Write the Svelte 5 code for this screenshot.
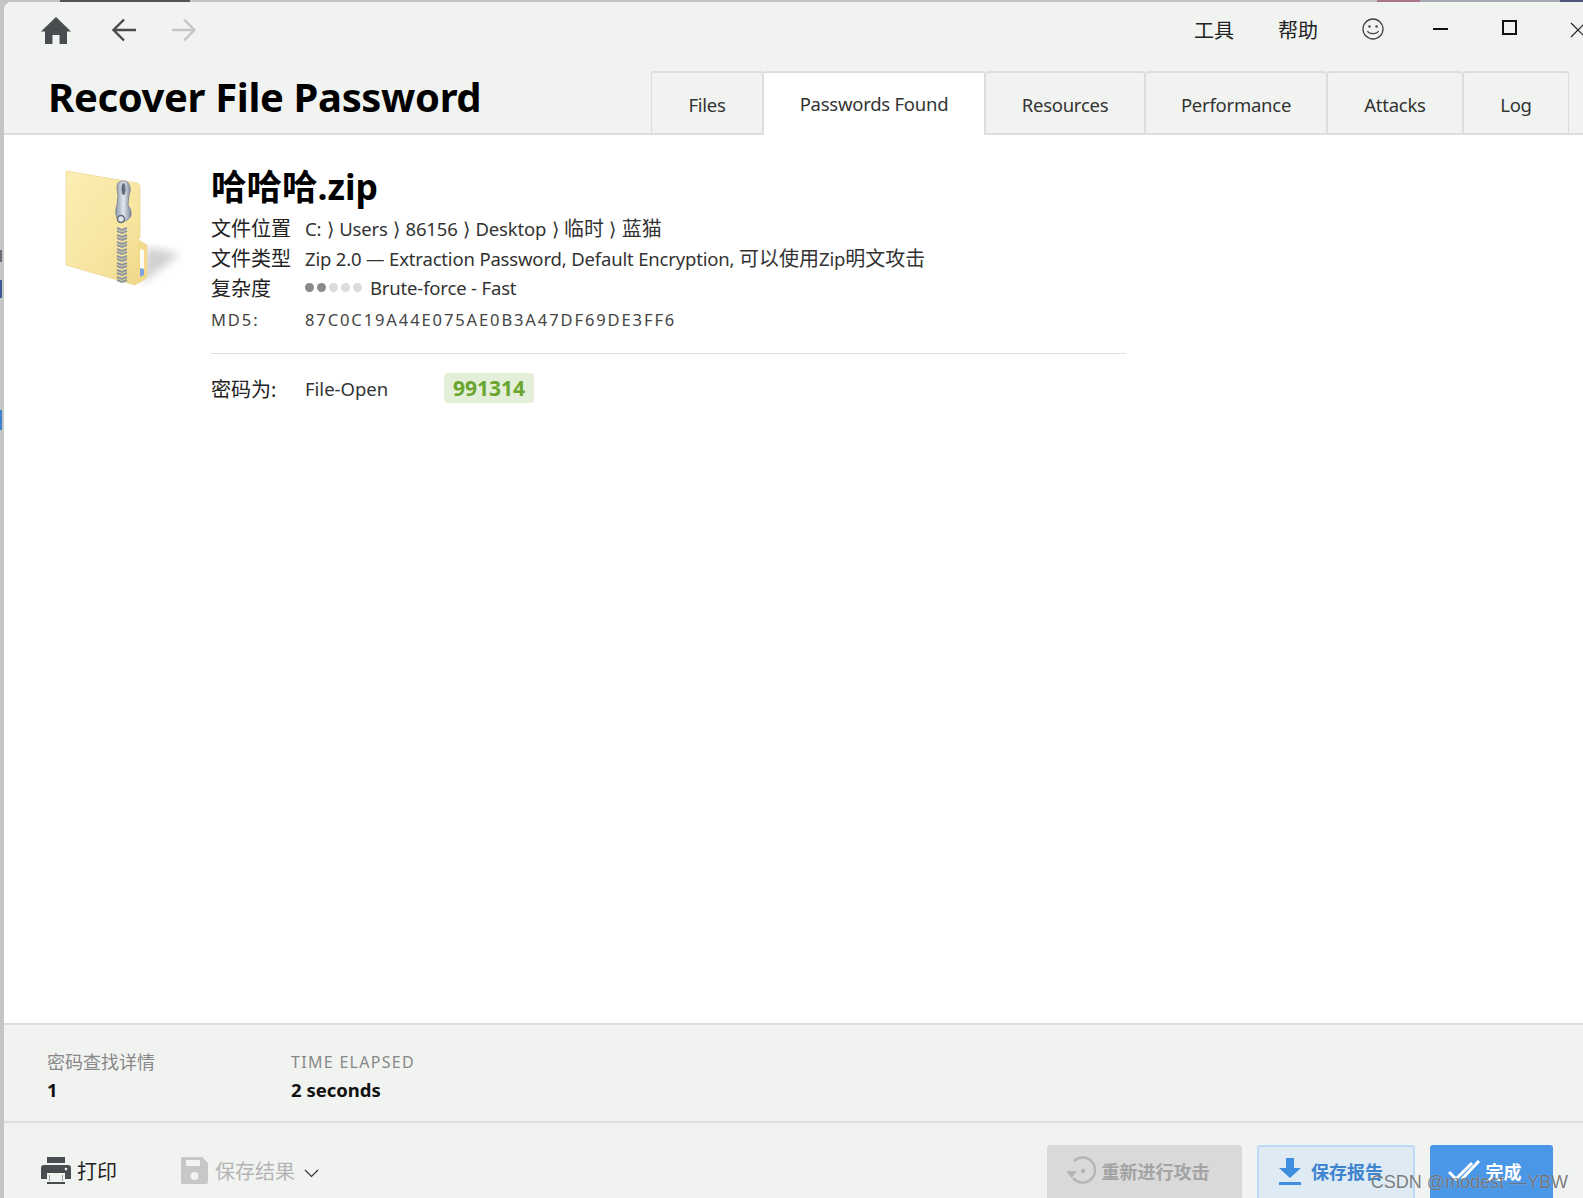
<script>
  const tabs = [
    { label: 'Files', width: 112 },
    { label: 'Passwords Found', width: 222, active: true },
    { label: 'Resources', width: 160 },
    { label: 'Performance', width: 182 },
    { label: 'Attacks', width: 136 },
    { label: 'Log', width: 106 }
  ];
  const path = [
    { text: 'C:' },
    { text: 'Users' },
    { text: '86156' },
    { text: 'Desktop' },
    { text: '临时', cjk: true },
    { text: '蓝猫', cjk: true }
  ];
  const teeth = [228, 235, 242, 249, 256, 263, 270, 277];
</script>

<div class="page">
  <div class="window">
    <header class="header">
      <div class="toolbar">
        <div class="nav">
          <svg class="home" viewBox="0 0 30 27"><path d="M15 0 30 14.500h-4V27h-7.500v-9h-7v9H4V14.500H0z" fill="#4a4d50"/></svg>
          <svg class="arrow" viewBox="0 0 24 24"><path d="M24 12H2M12 1.500 1.500 12 12 22.500" fill="none" stroke="#4a4a4a" stroke-width="2.400"/></svg>
          <svg class="arrow forward" viewBox="0 0 24 24"><path d="M0 12h22M12 1.500 22.500 12 12 22.500" fill="none" stroke="#c4c6c4" stroke-width="2.400"/></svg>
        </div>
        <div class="menu">
          <span class="menu-item">工具</span>
          <span class="menu-item">帮助</span>
          <svg class="smile" viewBox="0 0 22 22"><circle cx="11" cy="11" r="10" fill="none" stroke="#444" stroke-width="1.300"/><circle cx="7.500" cy="8.500" r="1.200" fill="#444"/><circle cx="14.500" cy="8.500" r="1.200" fill="#444"/><path d="M5.500 13c1.500 3.500 9.500 3.500 11 0" fill="none" stroke="#444" stroke-width="1.300"/></svg>
          <span class="win-btn min"></span>
          <span class="win-btn max"></span>
          <svg class="close" viewBox="0 0 16 16"><path d="M1 1l14 14M15 1 1 15" stroke="#222" stroke-width="1.200"/></svg>
        </div>
      </div>
      <div class="title-row">
        <h1>Recover File Password</h1>
        <nav class="tabs">
          {#each tabs as tab}
            <div class="tab" class:active={tab.active} style="width: {tab.width}px">{tab.label}</div>
          {/each}
        </nav>
      </div>
    </header>

    <main class="content">
      <svg class="folder" viewBox="60 165 125 125">
        <defs>
          <linearGradient id="paper" x1="0" y1="0" x2="1" y2="1">
            <stop offset="0" stop-color="#fcefb4"/>
            <stop offset="0.6" stop-color="#f7e5a0"/>
            <stop offset="1" stop-color="#efd684"/>
          </linearGradient>
          <linearGradient id="metal" x1="0" y1="0" x2="1" y2="0">
            <stop offset="0" stop-color="#8b97a8"/>
            <stop offset="0.5" stop-color="#e4e8ee"/>
            <stop offset="1" stop-color="#79859a"/>
          </linearGradient>
          <filter id="soft"><feGaussianBlur stdDeviation="4"/></filter>
        </defs>
        <path d="M147 247 180 254 141 284z" fill="#d0d0d0" filter="url(#soft)"/>
        <path d="M66 171 137 183q3 1 3 4V238l-3 1 10 6V276q0 2-2 3l-10 6L66 265z" fill="url(#paper)" stroke="#e6cf85" stroke-width="0.600"/>
        <path d="M139 244 147 246V276L137 282z" fill="#f3d98a"/>
        <path d="M140 249 144 250V271L140 273z" fill="#fdfdf5"/>
        <path d="M140 268 144 269V275L140 277z" fill="#7ba3dc"/>
        {#each teeth as y}
          <path d="M117 {y}l5 2 5-2M117 {y + 3}l5 2 5-2" fill="none" stroke="#8e96a2" stroke-width="2"/>
        {/each}
        <path d="M117 187q0-6 6-6t7 6q1 4-1 8l-1 10q4 5 3 11-5 8-13 4-4-7-1-15l1-10q-1-4-1-8z" fill="url(#metal)" stroke="#6c7686" stroke-width="0.700"/>
        <ellipse cx="123.500" cy="189" rx="2" ry="6" fill="#5f6a7b"/>
        <circle cx="121" cy="219" r="3.500" fill="#dfe4ea" stroke="#5f6a7b" stroke-width="1.500"/>
      </svg>

      <div class="details">
        <div class="file-name">哈哈哈.zip</div>
        <div class="info-grid">
          <span class="label">文件位置</span>
          <span class="value">
            {#each path as part, i}{#if i > 0}<span class="sep">⟩</span>{/if}<span class:cjk={part.cjk}>{part.text}</span>{/each}
          </span>
          <span class="label">文件类型</span>
          <span class="value">Zip 2.0 — Extraction Password, Default Encryption, <span class="cjk">可以使用</span>Zip<span class="cjk">明文攻击</span></span>
          <span class="label">复杂度</span>
          <span class="value complexity">
            <span class="dots">
              <i class="dark"></i><i class="dark"></i><i></i><i></i><i></i>
            </span>
            Brute-force - Fast
          </span>
          <span class="label md5">MD5:</span>
          <span class="value md5">87C0C19A44E075AE0B3A47DF69DE3FF6</span>
        </div>
        <hr />
        <div class="password-row">
          <span class="label">密码为:</span>
          <span class="pw-type">File-Open</span>
          <span class="badge">991314</span>
        </div>
      </div>
    </main>

    <section class="stats">
      <div class="stat first">
        <div class="stat-label cjk-label">密码查找详情</div>
        <div class="stat-value">1</div>
      </div>
      <div class="stat">
        <div class="stat-label spaced">TIME ELAPSED</div>
        <div class="stat-value">2 seconds</div>
      </div>
    </section>

    <footer class="actions">
      <div class="action">
        <svg class="print-icon" viewBox="0 0 30 27"><path d="M6 0h18v6H6zM3 8h24q3 0 3 3v11h-6v-6H6v6H0V11q0-3 3-3z" fill="#4a4d50"/><path d="M8 18h14v6H8z" fill="#4a4d50"/><path d="M8.500 18h13v6h-13z" fill="#f1f3f1"/><path d="M6 25h18v2H6z" fill="#4a4d50"/><circle cx="25" cy="12" r="1.300" fill="#f1f3f1"/></svg>
        <span>打印</span>
      </div>
      <div class="action muted">
        <svg class="save-icon" viewBox="0 0 27 27"><path d="M2 0h19l6 6v19q0 2-2 2H2q-2 0-2-2V2q0-2 2-2z" fill="#c6c8c6"/><path d="M5 3h14v6H5z" fill="#f1f3f1"/><circle cx="13.500" cy="19" r="4" fill="#f1f3f1"/></svg>
        <span>保存结果</span>
        <svg class="chevron" viewBox="0 0 15 9"><path d="M1 1l6.500 6.500L14 1" fill="none" stroke="#333" stroke-width="1.200"/></svg>
      </div>
      <div class="buttons">
        <div class="btn disabled">
          <svg viewBox="0 0 30 30" class="btn-icon"><path d="M8 5a12.500 12.500 0 1 1-1 17" fill="none" stroke="#b5b5b5" stroke-width="2.600"/><path d="M0 15h11l-5.500 7z" fill="#b5b5b5"/><circle cx="17" cy="15" r="2.200" fill="#b5b5b5"/></svg>
          重新进行攻击
        </div>
        <div class="btn light">
          <svg viewBox="0 0 22 27" class="btn-icon small"><path d="M7 0h8v10h7L11 20 0 10h7zM0 24h22v3H0z" fill="#3f8ee0"/></svg>
          保存报告
        </div>
        <div class="btn primary">
          <svg viewBox="0 0 34 22" class="btn-icon check"><path d="M1 12l7 7L24 3M14 19 31 1" fill="none" stroke="#fff" stroke-width="3"/></svg>
          完成
        </div>
      </div>
    </footer>
  </div>
  <div class="watermark">CSDN @modest —YBW</div>
</div>

<style>
  :global(body) {
    margin: 0;
    background: #c4c6c4;
  }

  .page {
    position: relative;
    width: 1583px;
    height: 1198px;
    overflow: hidden;
    padding: 2px 0 0 4px;
    box-sizing: border-box;
    font-family: "Noto Sans", "Noto Sans CJK SC", sans-serif;
    color: #222;
    /* bits of the desktop behind the window */
    background:
      linear-gradient(90deg, #c4c6c4 60px, #555 60px 190px, #c4c6c4 190px 1377px, #a8748a 1377px 1420px, #a4aab6 1420px 1560px, #50557a 1560px) top / 100% 2px no-repeat,
      linear-gradient(#c4c6c4 250px, #6a6a78 250px 262px, #c4c6c4 262px 280px, #3d5a98 280px 298px, #c4c6c4 298px 410px, #3f7fd0 410px 430px, #c4c6c4 430px) left / 2px 100% no-repeat,
      #c4c6c4;
  }

  .window {
    height: 1196px;
    display: flex;
    flex-direction: column;
    background: #fff;
    border-top-left-radius: 8px;
    overflow: hidden;
  }

  .header {
    background: #f1f3f1;
    border-bottom: 2px solid #dcdedc;
    height: 133px;
    box-sizing: border-box;
    flex: none;
  }

  .toolbar {
    display: flex;
    justify-content: space-between;
    height: 69px;
  }

  .nav {
    display: flex;
    align-items: flex-start;
    padding: 15px 0 0 37px;
  }

  .home {
    width: 30px;
    height: 27px;
  }

  .arrow {
    width: 24px;
    height: 24px;
    margin: 1px 0 0 41px;
  }

  .arrow.forward {
    margin-left: 36px;
  }

  .menu {
    display: flex;
    align-items: flex-start;
    position: relative;
  }

  .menu-item {
    font-size: 20px;
    line-height: 26px;
    margin-top: 16px;
    margin-right: 44px;
    color: #222;
  }

  .smile {
    width: 22px;
    height: 22px;
    margin: 16px 49px 0 0;
  }

  .win-btn {
    display: block;
    box-sizing: border-box;
    width: 15px;
  }

  .min {
    height: 2px;
    background: #111;
    margin: 26px 54px 0 0;
  }

  .max {
    height: 15px;
    border: 2px solid #111;
    margin: 18px 53px 0 0;
  }

  .close {
    width: 16px;
    height: 16px;
    margin: 20px -3px 0 0;
  }

  .title-row {
    display: flex;
    justify-content: space-between;
    height: 62px;
    padding: 0 14px 0 44px;
  }

  h1 {
    margin: 0;
    font-size: 40px;
    line-height: 50px;
    margin-top: 1px;
    font-weight: 700;
    color: #000;
    letter-spacing: -0.35px;
  }

  .tabs {
    display: flex;
    height: 62px;
  }

  .tab {
    box-sizing: border-box;
    height: 62px;
    display: flex;
    align-items: center;
    justify-content: center;
    padding-top: 2px;
    font-size: 18.500px;
    letter-spacing: -0.25px;
    color: #333;
    border: 2px solid #dcdedc;
    border-bottom: none;
    border-left-width: 1px;
    border-right-width: 1px;
    border-radius: 3px 3px 0 0;
  }

  .tab.active {
    height: 64px;
    padding-top: 0;
    padding-bottom: 2px;
    background: #fff;
    position: relative;
  }

  .content {
    flex: 1;
    display: flex;
    padding: 30px 0 0 56px;
    background: #fff;
  }

  .folder {
    width: 125px;
    height: 125px;
    flex: none;
    margin-left: 0;
  }

  .details {
    width: 915px;
    margin-left: 26px;
  }

  .file-name {
    font-size: 35.500px;
    font-weight: 700;
    line-height: 46px;
    color: #000;
    margin-top: -2px;
  }

  .info-grid {
    display: grid;
    grid-template-columns: 94px 1fr;
    grid-auto-rows: 30px;
    align-items: center;
    margin-top: 3px;
  }

  .label {
    color: #222;
    font-size: 20px;
  }

  .value {
    color: #333;
    font-size: 18.500px;
    letter-spacing: -0.17px;
    white-space: nowrap;
  }

  .cjk {
    font-size: 20px;
    letter-spacing: 0;
  }

  .sep {
    margin: 0 5.500px;
    font-size: 19px;
  }

  .complexity {
    display: flex;
    align-items: center;
  }

  .dots {
    display: flex;
    gap: 3px;
    margin-right: 8px;
  }

  .dots i {
    display: block;
    width: 9px;
    height: 9px;
    border-radius: 50%;
    background: #dcdcdc;
  }

  .dots i.dark {
    background: #8a8a8a;
  }

  .md5 {
    font-size: 16.500px;
    letter-spacing: 1.900px;
    color: #444;
    position: relative;
    top: 2px;
  }

  hr {
    border: none;
    border-top: 1px solid #dedede;
    margin: 21px 0 0;
  }

  .password-row {
    display: flex;
    align-items: center;
    margin-top: 19px;
    height: 30px;
  }

  .password-row .label {
    width: 94px;
  }

  .pw-type {
    width: 139px;
    font-size: 18.500px;
    color: #333;
  }

  .badge {
    background: #e3efd8;
    color: #6aa52f;
    font-weight: 700;
    font-size: 21px;
    line-height: 30px;
    padding: 0 9px;
    border-radius: 4px;
  }

  .stats {
    flex: none;
    box-sizing: border-box;
    height: 100px;
    display: flex;
    padding: 23px 0 0 43px;
    background: #f1f3f1;
    border-top: 2px solid #dcdedc;
    border-bottom: 2px solid #dcdedc;
  }

  .stat.first {
    width: 244px;
  }

  .stat-label {
    font-size: 16px;
    line-height: 28px;
    color: #888;
  }

  .stat-label.cjk-label {
    font-size: 18px;
  }

  .stat-label.spaced {
    letter-spacing: 1.300px;
  }

  .stat-value {
    font-size: 18.500px;
    line-height: 27px;
    font-weight: 700;
    color: #111;
  }

  .actions {
    flex: none;
    height: 75px;
    display: flex;
    padding-left: 37px;
    background: #f1f3f1;
  }

  .action {
    display: flex;
    align-items: center;
    height: 28px;
    margin-top: 33px;
    font-size: 20px;
    color: #222;
  }

  .action.muted {
    margin-left: 64px;
    color: #b4b4b4;
  }

  .print-icon {
    width: 30px;
    height: 27px;
    margin-right: 6px;
  }

  .save-icon {
    width: 27px;
    height: 27px;
    margin-right: 7px;
  }

  .chevron {
    width: 15px;
    height: 9px;
    margin: 7px 0 0 9px;
  }

  .buttons {
    display: flex;
    gap: 15px;
    margin-left: auto;
    padding: 22px 30px 0 0;
  }

  .btn {
    box-sizing: border-box;
    height: 70px;
    padding-bottom: 18px;
    display: flex;
    align-items: center;
    justify-content: center;
    font-size: 18px;
    font-weight: 700;
    border-radius: 3px;
  }

  .btn.disabled {
    width: 195px;
    padding-right: 14px;
    background: #d9d9d9;
    color: #a3a3a3;
  }

  .btn.light {
    width: 158px;
    padding-right: 10px;
    background: #deebf5;
    color: #3f84cf;
    border: 2px solid #bcd8f3;
  }

  .btn.primary {
    width: 123px;
    padding-right: 14px;
    background: #4a97e8;
    color: #fff;
  }

  .btn-icon {
    width: 30px;
    height: 30px;
    margin-right: 6px;
  }

  .btn-icon.small {
    width: 22px;
    height: 27px;
    margin-right: 10px;
  }

  .btn-icon.check {
    width: 34px;
    height: 22px;
    margin-right: 4px;
  }

  .watermark {
    position: absolute;
    right: 15px;
    bottom: 5px;
    font-family: "Liberation Sans", sans-serif;
    font-size: 18px;
    color: rgba(90, 90, 90, 0.8);
    text-shadow: 0 0 1px rgba(255, 255, 255, 0.6);
  }
</style>
